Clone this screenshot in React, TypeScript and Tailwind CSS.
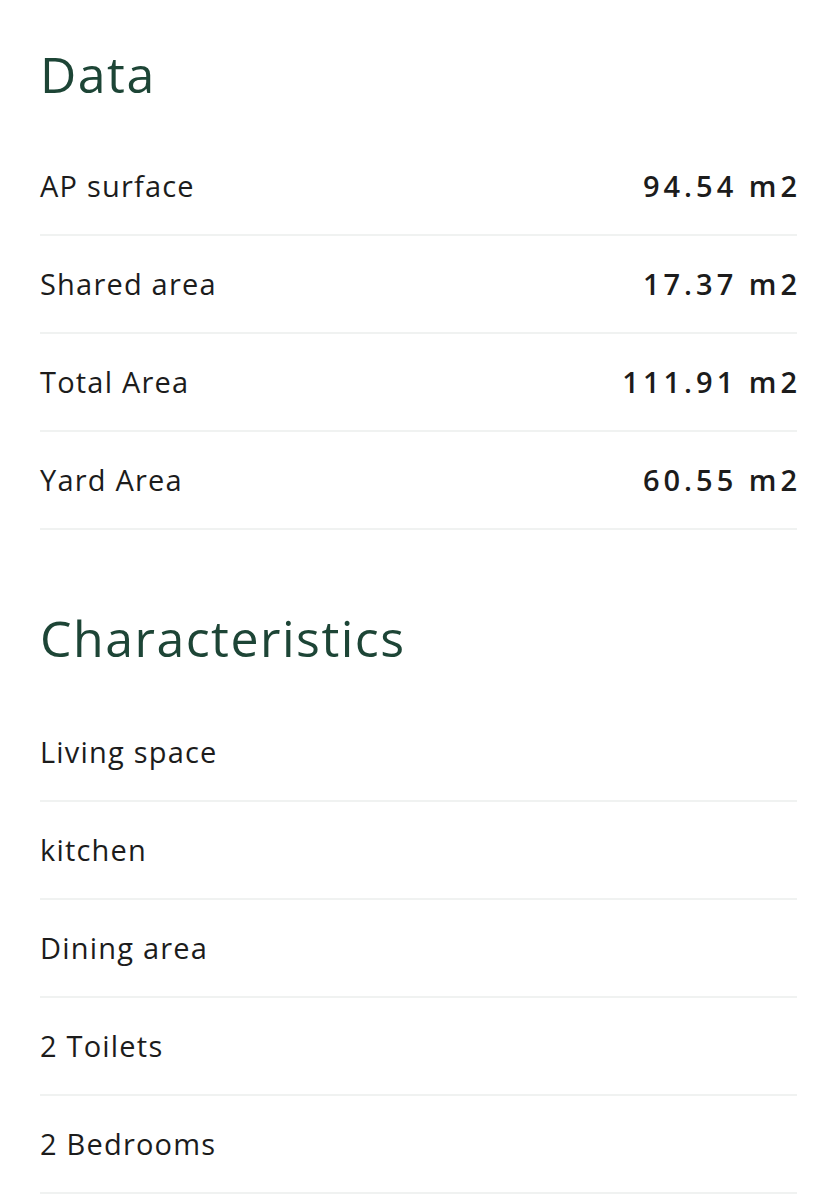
const dataRows = [
  { label: "AP surface", value: "94.54 m2" },
  { label: "Shared area", value: "17.37 m2" },
  { label: "Total Area", value: "111.91 m2" },
  { label: "Yard Area", value: "60.55 m2" },
];

const features = ["Living space", "kitchen", "Dining area", "2 Toilets", "2 Bedrooms"];

const Row = ({ label, value }: { label: string; value?: string }) => (
  <div className="flex h-[98px] items-center justify-between border-b-2 border-[#f0f2f1]">
    <span className="text-[29px] tracking-[1.2px] text-[#1c1c1c]">{label}</span>
    {value && (
      <span className="-mr-[4px] text-[29px] font-semibold tracking-[4px] text-[#1c1c1c]">{value}</span>
    )}
  </div>
);

const App = () => {
  return (
    <div className="min-h-[1200px] bg-white px-10 pt-[46px] font-['Open_Sans',sans-serif]">
      {/* DATA */}
      <h2 className="mb-[36px] text-[50px] leading-[56px] tracking-[1.5px] text-[#1d4536]">Data</h2>
      <div>
        {dataRows.map((r) => (
          <Row key={r.label} label={r.label} value={r.value} />
        ))}
      </div>

      {/* CHARACTERISTICS */}
      <h2 className="mt-[80px] mb-[38px] text-[50px] leading-[56px] tracking-[1.5px] text-[#1d4536]">
        Characteristics
      </h2>
      <div>
        {features.map((f) => (
          <Row key={f} label={f} />
        ))}
      </div>
    </div>
  );
};

export default App;
